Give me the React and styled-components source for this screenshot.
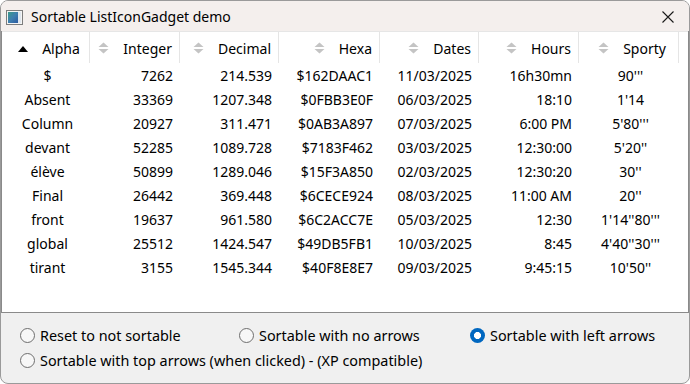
import React from "react";
import styled, { createGlobalStyle } from "styled-components";

const GlobalStyle = createGlobalStyle`
  html, body {
    margin: 0;
    padding: 0;
    background: #ffffff;
  }
  body {
    font-family: "Noto Sans", "Open Sans", sans-serif;
    font-size: 14px;
    color: #000;
  }
`;

const columns = [
  { key: "alpha", title: "Alpha", width: 88, align: "center", sorted: true },
  { key: "integer", title: "Integer", width: 90, align: "right" },
  { key: "decimal", title: "Decimal", width: 99, align: "right" },
  { key: "hexa", title: "Hexa", width: 101, align: "right" },
  { key: "dates", title: "Dates", width: 99, align: "right" },
  { key: "hours", title: "Hours", width: 100, align: "right" },
  { key: "sporty", title: "Sporty", width: 100, align: "center" },
];

const rows = [
  ["$", "7262", "214.539", "$162DAAC1", "11/03/2025", "16h30mn", "90'''"],
  ["Absent", "33369", "1207.348", "$0FBB3E0F", "06/03/2025", "18:10", "1'14"],
  ["Column", "20927", "311.471", "$0AB3A897", "07/03/2025", "6:00 PM", "5'80'''"],
  ["devant", "52285", "1089.728", "$7183F462", "03/03/2025", "12:30:00", "5'20''"],
  ["élève", "50899", "1289.046", "$15F3A850", "02/03/2025", "12:30:20", "30''"],
  ["Final", "26442", "369.448", "$6CECE924", "08/03/2025", "11:00 AM", "20''"],
  ["front", "19637", "961.580", "$6C2ACC7E", "05/03/2025", "12:30", "1'14''80'''"],
  ["global", "25512", "1424.547", "$49DB5FB1", "10/03/2025", "8:45", "4'40''30'''"],
  ["tirant", "3155", "1545.344", "$40F8E8E7", "09/03/2025", "9:45:15", "10'50''"],
];

const options = [
  "Reset to not sortable",
  "Sortable with no arrows",
  "Sortable with left arrows",
  "Sortable with top arrows (when clicked) - (XP compatible)",
];

const gridTemplate = columns.map((c) => `${c.width}px`).join(" ") + " 1fr";

const AppIcon = () => (
  <svg width="17" height="15" viewBox="0 0 17 15">
    <defs>
      <linearGradient id="pic" x1="0" y1="0" x2="1" y2="1">
        <stop offset="0" stopColor="#3a9a8a" />
        <stop offset="0.5" stopColor="#3f7fb0" />
        <stop offset="1" stopColor="#2c5aa0" />
      </linearGradient>
    </defs>
    <rect x="0.5" y="0.5" width="16" height="14" fill="#f4f4f4" stroke="#7d7d7d" />
    <rect x="2" y="2" width="10" height="11" fill="url(#pic)" />
    <rect x="12" y="2" width="3" height="11" fill="#dfe6ee" />
  </svg>
);

const CloseIcon = () => (
  <svg width="12" height="12" viewBox="0 0 12 12">
    <path d="M0.5 0.5 L11.5 11.5 M11.5 0.5 L0.5 11.5" stroke="#1a1a1a" strokeWidth="1.1" fill="none" />
  </svg>
);

const SortArrows = ({ active }) =>
  active ? (
    <svg width="10" height="7" viewBox="0 0 10 7">
      <path d="M0 7 L5 1 L10 7 Z" fill="#000" />
    </svg>
  ) : (
    <svg width="11" height="12" viewBox="0 0 11 12">
      <path d="M0.5 5 L5.5 0.5 L10.5 5 Z" fill="#c4c4c4" />
      <path d="M0.5 7 L5.5 11.5 L10.5 7 Z" fill="#c4c4c4" />
    </svg>
  );

export default function App() {
  return (
    <>
      <GlobalStyle />
      <Window>
        <TitleBar>
          <TitleIcon>
            <AppIcon />
          </TitleIcon>
          <Title>Sortable ListIconGadget demo</Title>
          <CloseButton>
            <CloseIcon />
          </CloseButton>
        </TitleBar>

        <ListView>
          <HeaderRow>
            {columns.map((c) => (
              <HeaderCell key={c.key} $align={c.align}>
                <SortArrows active={c.sorted} />
                <span>{c.title}</span>
              </HeaderCell>
            ))}
            <HeaderFiller />
          </HeaderRow>
          {rows.map((r, i) => (
            <DataRow key={i}>
              {r.map((v, j) => (
                <DataCell key={j} $align={columns[j].align}>
                  {v}
                </DataCell>
              ))}
            </DataRow>
          ))}
        </ListView>

        <OptionsPanel>
          {options.map((o, i) => (
            <RadioOption key={o} $wide={i === 3}>
              <RadioMark $checked={i === 2} />
              <span>{o}</span>
            </RadioOption>
          ))}
        </OptionsPanel>
      </Window>
    </>
  );
}

const Window = styled.div`
  width: 690px;
  height: 384px;
  box-sizing: border-box;
  border: 1px solid #9a9a9a;
  border-radius: 8px;
  overflow: hidden;
  display: flex;
  flex-direction: column;
  background: #f0f0f0;
`;

const TitleBar = styled.div`
  height: 30px;
  flex: none;
  display: flex;
  align-items: center;
  background: #f4efed;
  padding-left: 5px;
`;

const TitleIcon = styled.div`
  display: flex;
  width: 17px;
  height: 15px;
  margin-top: 2px;
`;

const Title = styled.div`
  margin-left: 8px;
  font-size: 14px;
  color: #000;
  flex: 1;
`;

const CloseButton = styled.div`
  width: 46px;
  height: 30px;
  display: flex;
  align-items: center;
  justify-content: center;
  margin-right: -2px;
  padding-top: 2px;
  box-sizing: border-box;
`;

const ListView = styled.div`
  flex: 1;
  background: #ffffff;
  border: 1px solid #8a8a8a;
  border-top: none;
`;

const HeaderRow = styled.div`
  display: grid;
  grid-template-columns: ${gridTemplate};
  height: 31px;
  border-top: 1px solid #e6e6e6;
`;

const HeaderCell = styled.div`
  display: flex;
  align-items: center;
  justify-content: ${(p) => (p.$align === "center" ? "center" : "flex-end")};
  gap: 14px;
  padding: ${(p) => (p.$align === "center" ? "1px 7px 0 14px" : "1px 7px 0 3px")};
  border-right: 1px solid #e5e5e5;
  box-sizing: border-box;
  white-space: nowrap;
  font-size: 14px;
`;

const HeaderFiller = styled.div``;

const DataRow = styled.div`
  display: grid;
  grid-template-columns: ${gridTemplate};
  height: 24px;
  align-items: center;
`;

const DataCell = styled.div`
  text-align: ${(p) => p.$align};
  padding: ${(p) => (p.$align === "center" ? "0 0 0 3px" : "0 7px 0 0")};
  white-space: nowrap;
  font-size: 14px;
`;

const OptionsPanel = styled.div`
  height: 70px;
  flex: none;
  box-sizing: border-box;
  padding: 10px 0 0 19px;
  display: grid;
  grid-template-columns: 219px 231px 1fr;
  grid-auto-rows: 25px;
`;

const RadioOption = styled.label`
  display: flex;
  align-items: center;
  gap: 5px;
  font-size: 14.4px;
  color: #000;
  white-space: nowrap;
  grid-column: ${(p) => (p.$wide ? "1 / -1" : "auto")};
`;

const RadioMark = styled.span`
  width: 15px;
  height: 15px;
  box-sizing: border-box;
  border-radius: 50%;
  flex: none;
  border: ${(p) => (p.$checked ? "none" : "1px solid #6e6e6e")};
  background: ${(p) =>
    p.$checked
      ? "radial-gradient(circle, #ffffff 0 3.2px, #0067c0 3.8px)"
      : "#f7f7f7"};
`;
